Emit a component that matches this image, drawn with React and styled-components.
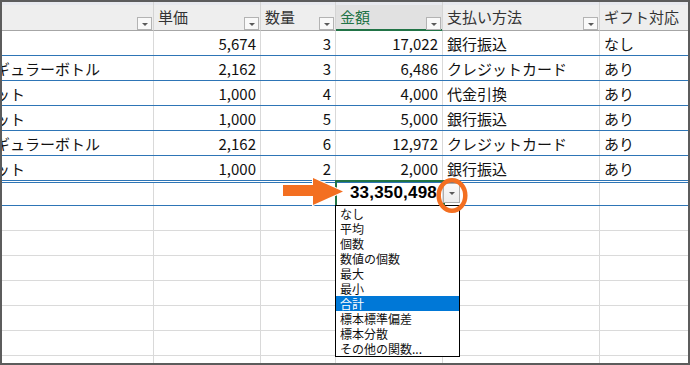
import React from 'react'
import styled, { createGlobalStyle, css } from 'styled-components'

const COLS = '152px 107px 75px 107px 157px 110px'
const BLUE = '#2e75b6'
const GREEN = '#217346'
const ORANGE = '#f36f21'

const rows = [
    ['', '5,674', '3', '17,022', '銀行振込', 'なし'],
    ['レギュラーボトル', '2,162', '3', '6,486', 'クレジットカード', 'あり'],
    ['セット', '1,000', '4', '4,000', '代金引換', 'あり'],
    ['セット', '1,000', '5', '5,000', '銀行振込', 'あり'],
    ['レギュラーボトル', '2,162', '6', '12,972', 'クレジットカード', 'あり'],
    ['セット', '1,000', '2', '2,000', '銀行振込', 'あり'],
]

const headers = ['', '単価', '数量', '金額', '支払い方法', 'ギフト対応']
const aligns = ['left', 'right', 'right', 'right', 'left', 'left']

const menuItems = ['なし', '平均', '個数', '数値の個数', '最大', '最小', '合計', '標本標準偏差', '標本分散', 'その他の関数...']

function App() {
    return <>
        <GlobalStyle />
        <Frame>
            <Sheet>
                <HeaderRow>
                    {headers.map((h, i) =>
                        <HeaderCell key={i} $active={i === 3}>
                            <span>{h}</span>
                            <FilterButton><Tri /></FilterButton>
                        </HeaderCell>
                    )}
                </HeaderRow>
                {rows.map((r, ri) =>
                    <DataRow key={ri}>
                        {r.map((v, ci) =>
                            <Cell key={ci} $align={aligns[ci]}>
                                {ci === 0 ? <Clipped>{v}</Clipped> : v}
                            </Cell>
                        )}
                    </DataRow>
                )}
                <TotalRow>
                    <Cell /><Cell /><Cell />
                    <TotalCell>33,350,498</TotalCell>
                    <Cell /><Cell />
                </TotalRow>
                {Array(7).fill().map((_, i) =>
                    <EmptyRow key={i}>
                        {headers.map((_, ci) => <Cell key={ci} />)}
                    </EmptyRow>
                )}
            </Sheet>

            <Selection />
            <Menu>
                {menuItems.map(m => <MenuItem key={m} $selected={m === '合計'}>{m}</MenuItem>)}
            </Menu>
            <TotalButton><Tri /></TotalButton>
            <Circle width="36" height="38" viewBox="0 0 36 38">
                <ellipse cx="17" cy="18.5" rx="13.3" ry="15.3" fill="none" stroke={ORANGE} strokeWidth="4.5" />
            </Circle>
            <Arrow width="68" height="34" viewBox="0 0 68 34">
                <polygon
                    points="3,9 33,9 33,2 63,15.5 33,29 33,20 3,20"
                    fill={ORANGE}
                    stroke="#fff"
                    strokeWidth="2"
                    paintOrder="stroke"
                    strokeLinejoin="miter"
                />
            </Arrow>
        </Frame>
    </>
}

export default App

const GlobalStyle = createGlobalStyle`
    body {
        margin: 0;
        background: #fff;
        font-family: 'Noto Sans CJK JP', 'Noto Sans', sans-serif;
    }
`
const Frame = styled.div`
    position: relative;
    width: 690px;
    height: 365px;
    box-sizing: border-box;
    border: 2px solid #5c5c5c;
    overflow: hidden;
    background: #fff;
`
const Sheet = styled.div`
    width: max-content;
`
const rowBase = css`
    display: grid;
    grid-template-columns: ${COLS};
    box-sizing: border-box;
`
const HeaderRow = styled.div`
    ${rowBase}
    height: 29px;
`
const HeaderCell = styled.div`
    display: flex;
    justify-content: space-between;
    padding-left: 4px;
    box-sizing: border-box;
    background: ${p => p.$active ? '#e1e1e1' : '#eeeeee'};
    box-shadow: inset 0 3px 0 #e7e9ef${p => p.$active ? `, inset 0 -1px 0 ${GREEN}` : ''};
    border-right: 1px solid #d4d4d4;
    border-bottom: 1px solid ${p => p.$active ? GREEN : '#a6a6a6'};
    color: ${p => p.$active ? GREEN : '#333'};
    font-size: 15px;
    overflow: hidden;
    > span {
        align-self: center;
        white-space: nowrap;
        line-height: 20px;
        padding-top: 1px;
    }
`
const FilterButton = styled.div`
    align-self: flex-end;
    flex: none;
    width: 15px;
    height: 13px;
    margin-right: 1px;
    box-sizing: border-box;
    border: 1px solid #b3b3b3;
    background: #f9f9f9;
    display: flex;
    align-items: center;
    justify-content: center;
`
const Tri = styled.i`
    width: 0;
    height: 0;
    border-left: 3px solid transparent;
    border-right: 3px solid transparent;
    border-top: 3px solid #5a5a5a;
    margin-top: 1px;
`
const DataRow = styled.div`
    ${rowBase}
    height: 25px;
    border-bottom: 1px solid ${BLUE};
`
const TotalRow = styled.div`
    ${rowBase}
    height: 24px;
    margin-top: 1px;
    border-top: 1px solid ${BLUE};
    border-bottom: 1px solid ${BLUE};
`
const EmptyRow = styled.div`
    ${rowBase}
    height: 25px;
    border-bottom: 1px solid #dadada;
`
const Cell = styled.div`
    display: flex;
    align-items: center;
    justify-content: ${p => p.$align === 'right' ? 'flex-end' : 'flex-start'};
    padding: 0 4px;
    box-sizing: border-box;
    border-right: 1px solid #d9d9d9;
    font-size: 15px;
    color: #111;
    white-space: nowrap;
    overflow: hidden;
`
const Clipped = styled.span`
    margin-left: -26px;
`
const TotalCell = styled(Cell)`
    justify-content: flex-end;
    align-items: flex-start;
    padding-right: 5px;
    font-family: 'Liberation Sans', Arial, sans-serif;
    font-weight: bold;
    font-size: 17px;
    line-height: 20px;
    letter-spacing: 0.2px;
    color: #000;
`
const Selection = styled.div`
    position: absolute;
    left: 333px;
    top: 178px;
    width: 110px;
    height: 27px;
    box-sizing: border-box;
    border: 2px solid ${GREEN};
`
const Menu = styled.div`
    position: absolute;
    left: 333px;
    top: 203px;
    width: 125px;
    height: 152px;
    box-sizing: border-box;
    border: 1px solid #000;
    background: #fff;
`
const MenuItem = styled.div`
    height: 15px;
    line-height: 15px;
    padding-left: 4px;
    font-size: 12px;
    white-space: nowrap;
    color: ${p => p.$selected ? '#fff' : '#111'};
    background: ${p => p.$selected ? '#0078d7' : 'transparent'};
`
const TotalButton = styled.div`
    position: absolute;
    left: 441px;
    top: 181px;
    width: 17px;
    height: 20px;
    box-sizing: border-box;
    border: 1px solid #adadad;
    background: linear-gradient(#fafafa, #ececec);
    display: flex;
    align-items: center;
    justify-content: center;
`
const Circle = styled.svg`
    position: absolute;
    left: 433px;
    top: 175px;
`
const Arrow = styled.svg`
    position: absolute;
    left: 278px;
    top: 174px;
`
